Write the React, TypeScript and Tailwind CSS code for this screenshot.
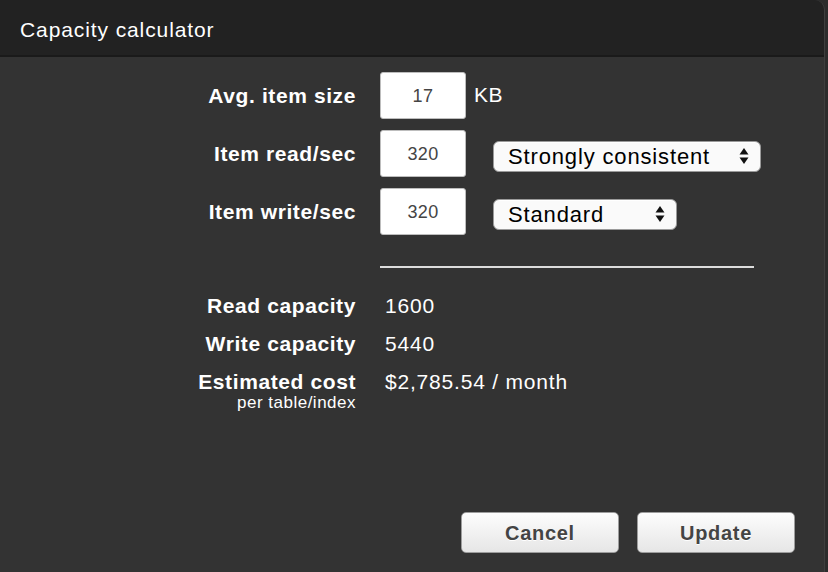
import React from "react";

const font = { fontFamily: '"Liberation Sans", Arial, sans-serif' };

function Arrows() {
  return (
    <svg width="10" height="18" viewBox="0 0 10 18" className="shrink-0">
      <path d="M5 1 L9.5 7.5 L0.5 7.5 Z" fill="#111" />
      <path d="M5 17 L9.5 10.5 L0.5 10.5 Z" fill="#111" />
    </svg>
  );
}

function Select({ label, width }: { label: string; width: string }) {
  return (
    <div
      className={`${width} h-[31px] mt-[5px] flex items-center justify-between pl-[14px] pr-[11px] rounded-[6px] border border-[#9a9a9a] bg-[#fafafa] text-[22px] text-black tracking-[0.85px] shadow-[inset_0_1px_0_#fff]`}
    >
      <span>{label}</span>
      <Arrows />
    </div>
  );
}

function NumInput({ value }: { value: string }) {
  return (
    <div className="w-[86px] h-[47px] flex items-center justify-center pt-[2px] rounded-[3px] border border-[#bdbdbd] bg-white text-[18px] text-[#444] tracking-[0.4px]">
      {value}
    </div>
  );
}

function Btn({ label }: { label: string }) {
  return (
    <div className="w-[158px] h-[41px] flex items-center justify-center rounded-[5px] border border-[#9d9d9d] bg-gradient-to-b from-[#fdfdfd] to-[#e6e6e6] text-[20px] font-bold text-[#444] tracking-[0.7px] [text-shadow:0_1px_0_#fff]">
      {label}
    </div>
  );
}

export default function App() {
  const label = "w-[356px] shrink-0 text-right text-[21px] font-bold text-white tracking-[0.6px]";
  const value = "ml-[29px] text-[21px] text-white tracking-[0.8px] leading-[24px]";
  return (
    <div className="w-[828px] h-[572px] bg-[#2c2c2c] overflow-hidden" style={font}>
      <div className="w-[825px] h-[572px] flex flex-col bg-[#333] rounded-tr-[10px] border-r border-[#3e3e3e] overflow-hidden">
        <div className="h-[57px] shrink-0 bg-[#222] border-b-2 border-[#1a1a1a] flex items-center pl-[20px] pt-[4px]">
          <span className="text-[21px] text-white tracking-[0.9px]">Capacity calculator</span>
        </div>
        <div className="flex-1 flex flex-col pt-[15px]">
          <div className="flex flex-col gap-[11px]">
            <div className="flex items-center h-[47px]">
              <div className={label}>Avg. item size</div>
              <div className="ml-[24px]"><NumInput value="17" /></div>
              <div className="ml-[8px] self-start mt-[7px] text-[21px] text-white tracking-[0.5px]">KB</div>
            </div>
            <div className="flex items-center h-[47px]">
              <div className={label}>Item read/sec</div>
              <div className="ml-[24px]"><NumInput value="320" /></div>
              <div className="ml-[27px]"><Select label="Strongly consistent" width="w-[268px]" /></div>
            </div>
            <div className="flex items-center h-[47px]">
              <div className={label}>Item write/sec</div>
              <div className="ml-[24px]"><NumInput value="320" /></div>
              <div className="ml-[27px]"><Select label="Standard" width="w-[184px]" /></div>
            </div>
          </div>
          <div className="ml-[380px] w-[374px] h-[2px] bg-[#dcdcdc] mt-[31px]" />
          <div className="flex flex-col mt-[26px] gap-[14px]">
            <div className="flex items-center h-[24px]">
              <div className={label}>Read capacity</div>
              <div className={value}>1600</div>
            </div>
            <div className="flex items-center h-[24px]">
              <div className={label}>Write capacity</div>
              <div className={value}>5440</div>
            </div>
            <div className="flex items-start">
              <div className="w-[356px] shrink-0 flex flex-col items-end">
                <div className="text-[21px] font-bold text-white tracking-[0.6px] leading-[24px]">Estimated cost</div>
                <div className="text-[17px] text-white tracking-[0.5px] leading-[18px]">per table/index</div>
              </div>
              <div className={value}>$2,785.54 / month</div>
            </div>
          </div>
          <div className="mt-auto flex justify-end gap-[18px] pr-[29px] pb-[19px]">
            <Btn label="Cancel" />
            <Btn label="Update" />
          </div>
        </div>
      </div>
    </div>
  );
}
